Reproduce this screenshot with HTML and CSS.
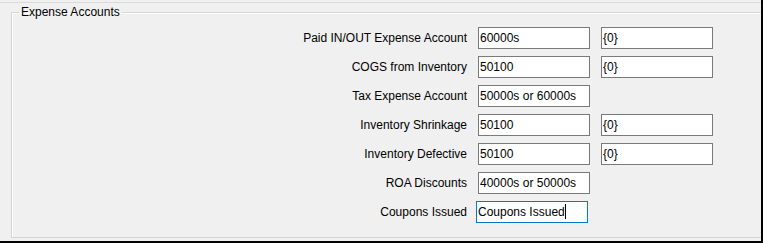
FILE: index.html
```html
<!DOCTYPE html>
<html lang="en">
<head>
  <meta charset="UTF-8" />
  <title>Expense Accounts</title>
  <link rel="stylesheet" href="styles.css">
</head>
<body>
  <div class="window">
    <div class="panel">
      <fieldset class="group">
        <legend>Expense Accounts</legend>
        <div class="rows">
          <label class="label">Paid IN/OUT Expense Account</label>
          <div class="field">60000s</div>
          <div class="field">{0}</div>

          <label class="label">COGS from Inventory</label>
          <div class="field">50100</div>
          <div class="field">{0}</div>

          <label class="label">Tax Expense Account</label>
          <div class="field">50000s or 60000s</div>
          <div></div>

          <label class="label">Inventory Shrinkage</label>
          <div class="field">50100</div>
          <div class="field">{0}</div>

          <label class="label">Inventory Defective</label>
          <div class="field">50100</div>
          <div class="field">{0}</div>

          <label class="label">ROA Discounts</label>
          <div class="field">40000s or 50000s</div>
          <div></div>

          <label class="label">Coupons Issued</label>
          <div class="field focused">Coupons Issued<span class="caret"></span></div>
          <div></div>
        </div>
      </fieldset>
    </div>
  </div>
</body>
</html>
```

FILE: styles.css
```css
body { margin:0; background:#f0f0f0; font-family:"Liberation Sans",Arial,sans-serif; font-size:12px; color:#000; }

.window {
  width:763px; height:243px; box-sizing:border-box;
  padding-top:2px; overflow:hidden;
  border-right:2px solid #000; border-bottom:2px solid #000;
}
.panel { border-top:1px solid #dadada; height:238px; }

.group {
  margin:2px -4px 0 11px; padding:0 0 0 7px;
  height:233px; box-sizing:border-box;
  border:1px solid #d5d5d5;
  box-shadow:inset 1px 1px 0 #fff;
}
.group legend { padding:0 2px; line-height:14px; }

.rows {
  margin-top:8px;
  display:grid;
  grid-template-columns:448px 112px 112px;
  grid-auto-rows:22px;
  column-gap:11px; row-gap:7px;
  align-items:center;
}
.label { text-align:right; }

.field {
  height:22px; box-sizing:border-box;
  border:1px solid #7a7a7a;
  background:#fff;
  padding:0 1px; line-height:20px;
  white-space:nowrap; overflow:hidden;
}
.field.focused { border-color:#0078d7; margin-left:-2px; width:112px; }
.caret {
  display:inline-block; width:1px; height:15px;
  background:#000; vertical-align:-3px;
}
```
